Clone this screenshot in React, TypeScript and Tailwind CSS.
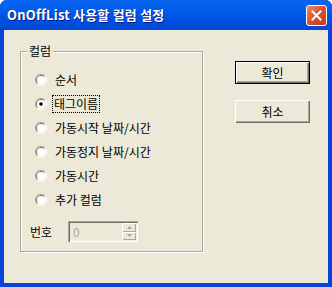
import React from "react"

const options = ["순서", "태그이름", "가동시작 날짜/시간", "가동정지 날짜/시간", "가동시간", "추가 컬럼"]

function Radio({ checked }: { checked?: boolean }) {
  return (
    <svg width="12" height="12" viewBox="0 0 12 12" className="shrink-0">
      <path d="M10 2 A5.6 5.6 0 0 0 2 10" fill="none" stroke="#ACA899" strokeWidth="1" />
      <path d="M2 10 A5.6 5.6 0 0 0 10 2" fill="none" stroke="#FFFFFF" strokeWidth="1" />
      <path d="M9.2 2.8 A4.5 4.5 0 0 0 2.8 9.2" fill="none" stroke="#716F64" strokeWidth="1" />
      <path d="M2.8 9.2 A4.5 4.5 0 0 0 9.2 2.8" fill="none" stroke="#F1EFE2" strokeWidth="1" />
      <circle cx="6" cy="6" r="4" fill="#FFFFFF" />
      {checked && <circle cx="6" cy="6" r="1.8" fill="#000000" />}
    </svg>
  )
}

function Button({ label, isDefault }: { label: string; isDefault?: boolean }) {
  return (
    <div
      className={`w-[75px] h-[23px] flex items-center justify-center text-[12px] text-black bg-[#ECE9D8] ${
        isDefault
          ? "border border-black shadow-[inset_1px_1px_0_#FFFFFF,inset_-1px_-1px_0_#716F64,inset_-2px_-2px_0_#ACA899]"
          : "shadow-[inset_1px_1px_0_#FFFFFF,inset_-1px_-1px_0_#716F64,inset_-2px_-2px_0_#ACA899]"
      }`}
    >
      {label}
    </div>
  )
}

export default function App() {
  return (
    <div
      className="w-[332px] h-[287px] flex flex-col bg-[#0842D8] rounded-t-[7px] overflow-hidden"
      style={{ fontFamily: '"Noto Sans CJK KR", "Liberation Sans", sans-serif' }}
    >
      {/* Title bar */}
      <div className="h-[30px] shrink-0 flex items-center justify-between pl-[7px] pr-[5px] bg-[#0055E5] bg-linear-to-b from-[#0A66F0] via-[#0056E8] to-[#0048D6]">
        <span className="text-white font-bold text-[13px] tracking-[0.2px] [text-shadow:1px_1px_0_#0A1883]">
          OnOffList 사용할 컬럼 설정
        </span>
        <div className="w-[21px] h-[21px] rounded-[3px] border border-white bg-[#D9502B] bg-linear-to-br from-[#EE8A6A] via-[#D9502B] to-[#C23A16] flex items-center justify-center">
          <svg width="11" height="11" viewBox="0 0 11 11">
            <path d="M1.5 1.5 L9.5 9.5 M9.5 1.5 L1.5 9.5" stroke="#FFFFFF" strokeWidth="2" strokeLinecap="square" />
          </svg>
        </div>
      </div>

      {/* Client area */}
      <div className="flex-1 mx-[4px] mb-[4px] bg-[#ECE9D8] flex pt-[21px] pl-[16px] text-[12px] text-black">
        {/* Group box */}
        <div className="relative w-[183px] h-[201px] border border-[#ACA899] shadow-[inset_1px_1px_0_#FFFFFF,1px_1px_0_#FFFFFF]">
          <span className="absolute -top-[9px] left-[6px] px-[2px] bg-[#ECE9D8] leading-[16px]">컬럼</span>
          <div className="flex flex-col pt-[16px] pl-[14px]">
            {options.map((o, i) => (
              <div key={o} className="h-[24px] flex items-center gap-[6px]">
                <Radio checked={i === 1} />
                <span
                  className={`leading-[16px] px-[1px] ${
                    i === 1 ? "outline outline-1 outline-dotted outline-black" : "border border-transparent"
                  }`}
                >
                  {o}
                </span>
              </div>
            ))}
          </div>
          <div className="flex items-center mt-[9px] pl-[9px] gap-[8px]">
            <span className="leading-[16px] w-[30px]">번호</span>
            <div className="w-[70px] h-[21px] flex bg-[#ECE9D8] shadow-[inset_1px_1px_0_#ACA899,inset_2px_2px_0_#716F64,inset_-1px_-1px_0_#FFFFFF,inset_-2px_-2px_0_#F1EFE2]">
              <span className="flex-1 pl-[5px] text-[#ACA899] leading-[21px]">0</span>
              <div className="w-[16px] flex flex-col py-[2px] pr-[2px]">
                <div className="flex-1 flex items-center justify-center shadow-[inset_1px_1px_0_#FFFFFF,inset_-1px_-1px_0_#ACA899]">
                  <svg width="5" height="3" viewBox="0 0 5 3"><path d="M0 3 L2.5 0 L5 3 Z" fill="#ACA899" /></svg>
                </div>
                <div className="flex-1 flex items-center justify-center shadow-[inset_1px_1px_0_#FFFFFF,inset_-1px_-1px_0_#ACA899]">
                  <svg width="5" height="3" viewBox="0 0 5 3"><path d="M0 0 L5 0 L2.5 3 Z" fill="#ACA899" /></svg>
                </div>
              </div>
            </div>
          </div>
        </div>

        {/* Buttons */}
        <div className="flex flex-col gap-[16px] pt-[10px] ml-[32px]">
          <Button label="확인" isDefault />
          <Button label="취소" />
        </div>
      </div>
    </div>
  )
}
